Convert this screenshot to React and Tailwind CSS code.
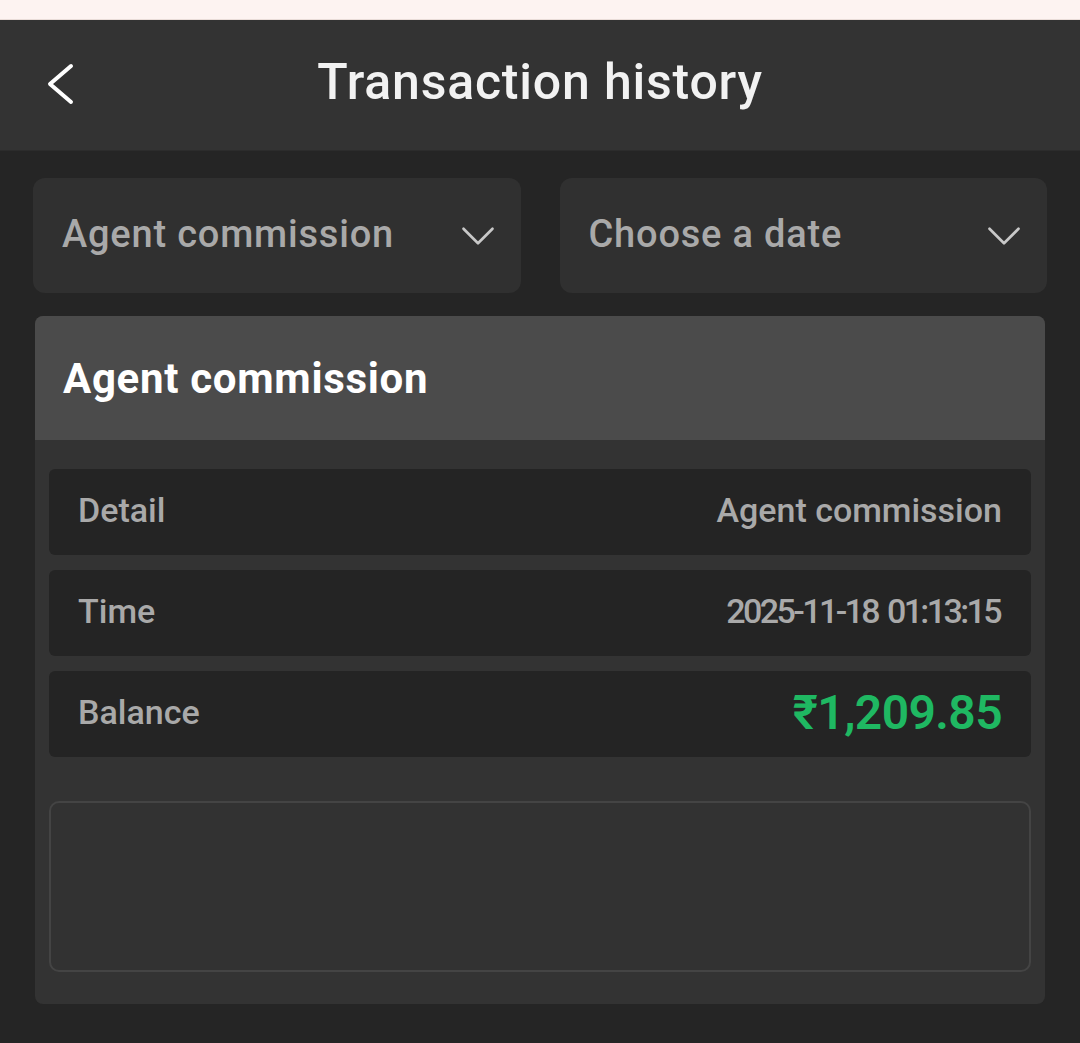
import { ChevronDown } from 'lucide-react';

const rows = [
  { label: 'Detail', value: 'Agent commission', extra: '' },
  { label: 'Time', value: '2025-11-18 01:13:15', extra: 'tracking-[-2.6px] [word-spacing:3px] pr-[2px]' },
];

export default function App() {
  return (
    <div className="min-h-[1043px] bg-[#252525] font-['Roboto',sans-serif]">
      {/* status strip */}
      <div className="h-[20px] bg-[#fdf3f1] border-b border-[#e9dcd8]" />

      {/* header */}
      <div className="relative h-[131px] bg-[#333333] border-b border-[#2c2c2c] flex items-center justify-center">
        <svg className="absolute left-[44px] top-[43px]" width="32" height="42" viewBox="0 0 32 42" fill="none">
          <polyline points="27,3 6,21 27,39" stroke="#ffffff" strokeWidth="4" strokeLinecap="round" strokeLinejoin="round" />
        </svg>
        <h1 className="text-[50px] font-medium text-[#f2f2f2] tracking-[0.8px] -mt-[6px]">Transaction history</h1>
      </div>

      {/* filters */}
      <div className="px-[33px] pt-[27px] grid grid-cols-2 gap-[39px]">
        <button className="h-[115px] rounded-[12px] bg-[#303030] flex items-center justify-between pl-[29px] pr-[14px]">
          <span className="text-[38px] font-medium text-[#a9a9a9] tracking-[0.8px] -mt-[3px]">Agent commission</span>
          <ChevronDown className="w-[58px] h-[58px] text-[#c8c8c8]" strokeWidth={1.1} />
        </button>
        <button className="h-[115px] rounded-[12px] bg-[#303030] flex items-center justify-between pl-[29px] pr-[14px]">
          <span className="text-[38px] font-medium text-[#a9a9a9] tracking-[0.8px] -mt-[3px]">Choose a date</span>
          <ChevronDown className="w-[58px] h-[58px] text-[#c8c8c8]" strokeWidth={1.1} />
        </button>
      </div>

      {/* card */}
      <div className="mx-[35px] mt-[23px] rounded-[8px] bg-[#333333] overflow-hidden">
        <div className="h-[124px] bg-[#4b4b4b] flex items-center px-[28px]">
          <h2 className="text-[42px] font-bold text-white tracking-[0.7px]">Agent commission</h2>
        </div>

        <div className="px-[14px] pt-[29px] flex flex-col gap-[15px]">
          {rows.map((r) => (
            <div key={r.label} className="h-[86px] rounded-[6px] bg-[#242424] flex items-center justify-between px-[29px]">
              <span className="text-[34px] font-medium text-[#a9a9a9] -mt-[3px]">{r.label}</span>
              <span className={`text-[34px] font-medium text-[#a9a9a9] -mt-[3px] ${r.extra}`}>{r.value}</span>
            </div>
          ))}
          <div className="h-[86px] rounded-[6px] bg-[#242424] flex items-center justify-between px-[29px]">
            <span className="text-[34px] font-medium text-[#a9a9a9] -mt-[3px]">Balance</span>
            <span className="text-[48px] font-semibold text-[#1fb862] tracking-[-0.6px] -mt-[2px]">₹1,209.85</span>
          </div>
        </div>

        <div className="px-[14px] pt-[44px] pb-[32px]">
          <div className="h-[171px] rounded-[10px] border-2 border-[#444444] bg-[#323232]" />
        </div>
      </div>
    </div>
  );
}
